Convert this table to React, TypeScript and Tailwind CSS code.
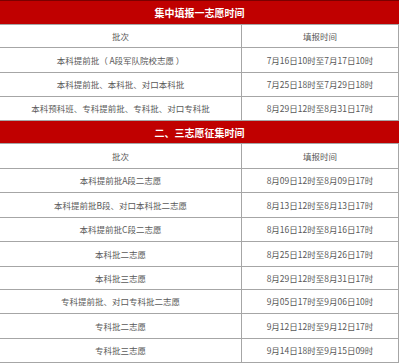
import React from "react";

type Row =
  | { kind: "header"; text: string; h: number; top?: boolean }
  | { kind: "row"; a: string; b: string; h: number };

const rows: Row[] = [
  { kind: "header", text: "集中填报一志愿时间", h: 25, top: true },
  { kind: "row", a: "批次", b: "填报时间", h: 23 },
  { kind: "row", a: "本科提前批（\u2009A段军队院校志愿\u2009）", b: "7月16日10时至7月17日10时", h: 25 },
  { kind: "row", a: "本科提前批、本科批、对口本科批", b: "7月25日18时至7月29日18时", h: 24 },
  { kind: "row", a: "本科预科班、专科提前批、专科批、对口专科批", b: "8月29日12时至8月31日17时", h: 24 },
  { kind: "header", text: "二、三志愿征集时间", h: 23 },
  { kind: "row", a: "批次", b: "填报时间", h: 25 },
  { kind: "row", a: "本科提前批A段二志愿", b: "8月09日12时至8月09日17时", h: 24 },
  { kind: "row", a: "本科提前批B段、对口本科批二志愿", b: "8月13日12时至8月13日17时", h: 25 },
  { kind: "row", a: "本科提前批C段二志愿", b: "8月16日12时至8月16日17时", h: 24 },
  { kind: "row", a: "本科批二志愿", b: "8月25日12时至8月26日17时", h: 25 },
  { kind: "row", a: "本科批三志愿", b: "8月29日12时至8月31日17时", h: 23 },
  { kind: "row", a: "专科提前批、对口专科批二志愿", b: "9月05日17时至9月06日10时", h: 24 },
  { kind: "row", a: "专科批二志愿", b: "9月12日12时至9月12日17时", h: 25 },
  { kind: "row", a: "专科批三志愿", b: "9月14日18时至9月15日09时", h: 24 },
];

export default function App() {
  return (
    <div
      className="w-[400px] h-[364px] bg-white overflow-hidden"
      style={{ fontFamily: '"Noto Sans CJK SC", "Noto Sans", sans-serif' }}
    >
      <div className="w-[399px] flex flex-col">
        {rows.map((r, i) =>
          r.kind === "header" ? (
            <div
              key={i}
              className={`flex items-center justify-center bg-[#c00000] text-white font-bold text-[10px] border-b border-b-[#a6a6a6] ${
                r.top ? "border-t border-t-[#7a0000]" : ""
              }`}
              style={{ height: r.h }}
            >
              {r.text}
            </div>
          ) : (
            <div
              key={i}
              className="flex border-b border-b-[#a6a6a6] text-[8.5px] text-[#595959]"
              style={{ height: r.h }}
            >
              <div className="w-[242px] flex items-center justify-center border-r border-r-[#a6a6a6]">
                {r.a}
              </div>
              <div className="flex-1 flex items-center justify-center border-r border-r-[#a6a6a6]">
                {r.b}
              </div>
            </div>
          )
        )}
      </div>
    </div>
  );
}
